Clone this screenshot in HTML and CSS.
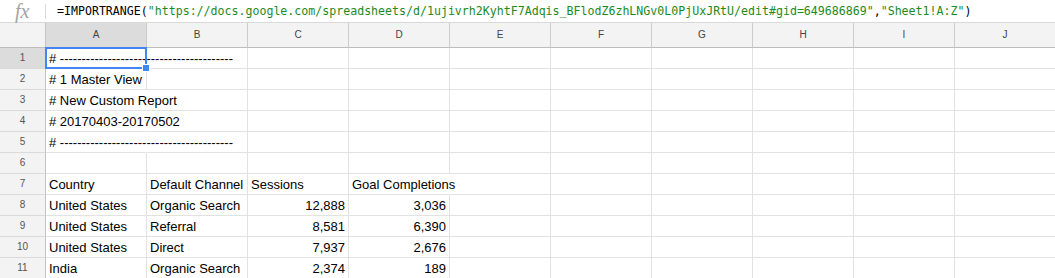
FILE: index.html
```html
<!DOCTYPE html>
<html lang="en">
<head>
    <meta charset="UTF-8">
    <title>Sheet1 - Google Sheets</title>
    <link rel="stylesheet" href="styles.css">
</head>
<body>
    <div class="formula-bar">
        <span class="fx">fx</span>
        <span class="fx-sep"></span>
        <div class="formula">=IMPORTRANGE(<span class="str">"https://docs.google.com/spreadsheets/d/1ujivrh2KyhtF7Adqis_BFlodZ6zhLNGv0L0PjUxJRtU/edit#gid=649686869"</span>,<span class="str">"Sheet1!A:Z"</span>)</div>
    </div>

    <div class="sheet">
        <!-- column headers -->
        <div class="corner"></div>
        <div class="col-head active">A</div>
        <div class="col-head">B</div>
        <div class="col-head">C</div>
        <div class="col-head">D</div>
        <div class="col-head">E</div>
        <div class="col-head">F</div>
        <div class="col-head">G</div>
        <div class="col-head">H</div>
        <div class="col-head">I</div>
        <div class="col-head">J</div>

        <!-- row 1 -->
        <div class="row-head active">1</div>
        <div class="cell spill selected">
            # ----------------------------------------
            <div class="cursor"><span class="handle"></span></div>
        </div>
        <div class="cell"></div><div class="cell"></div><div class="cell"></div><div class="cell"></div>
        <div class="cell"></div><div class="cell"></div><div class="cell"></div><div class="cell"></div><div class="cell"></div>

        <!-- row 2 -->
        <div class="row-head">2</div>
        <div class="cell"># 1 Master View</div>
        <div class="cell"></div><div class="cell"></div><div class="cell"></div><div class="cell"></div>
        <div class="cell"></div><div class="cell"></div><div class="cell"></div><div class="cell"></div><div class="cell"></div>

        <!-- row 3 -->
        <div class="row-head">3</div>
        <div class="cell spill"># New Custom Report</div>
        <div class="cell"></div><div class="cell"></div><div class="cell"></div><div class="cell"></div>
        <div class="cell"></div><div class="cell"></div><div class="cell"></div><div class="cell"></div><div class="cell"></div>

        <!-- row 4 -->
        <div class="row-head">4</div>
        <div class="cell spill"># 20170403-20170502</div>
        <div class="cell"></div><div class="cell"></div><div class="cell"></div><div class="cell"></div>
        <div class="cell"></div><div class="cell"></div><div class="cell"></div><div class="cell"></div><div class="cell"></div>

        <!-- row 5 -->
        <div class="row-head">5</div>
        <div class="cell spill"># ----------------------------------------</div>
        <div class="cell"></div><div class="cell"></div><div class="cell"></div><div class="cell"></div>
        <div class="cell"></div><div class="cell"></div><div class="cell"></div><div class="cell"></div><div class="cell"></div>

        <!-- row 6 -->
        <div class="row-head">6</div>
        <div class="cell"></div><div class="cell"></div><div class="cell"></div><div class="cell"></div><div class="cell"></div>
        <div class="cell"></div><div class="cell"></div><div class="cell"></div><div class="cell"></div><div class="cell"></div>

        <!-- row 7 -->
        <div class="row-head">7</div>
        <div class="cell">Country</div>
        <div class="cell">Default Channel</div>
        <div class="cell">Sessions</div>
        <div class="cell spill">Goal Completions</div>
        <div class="cell"></div><div class="cell"></div><div class="cell"></div><div class="cell"></div><div class="cell"></div><div class="cell"></div>

        <!-- row 8 -->
        <div class="row-head">8</div>
        <div class="cell">United States</div>
        <div class="cell">Organic Search</div>
        <div class="cell num">12,888</div>
        <div class="cell num">3,036</div>
        <div class="cell"></div><div class="cell"></div><div class="cell"></div><div class="cell"></div><div class="cell"></div><div class="cell"></div>

        <!-- row 9 -->
        <div class="row-head">9</div>
        <div class="cell">United States</div>
        <div class="cell">Referral</div>
        <div class="cell num">8,581</div>
        <div class="cell num">6,390</div>
        <div class="cell"></div><div class="cell"></div><div class="cell"></div><div class="cell"></div><div class="cell"></div><div class="cell"></div>

        <!-- row 10 -->
        <div class="row-head">10</div>
        <div class="cell">United States</div>
        <div class="cell">Direct</div>
        <div class="cell num">7,937</div>
        <div class="cell num">2,676</div>
        <div class="cell"></div><div class="cell"></div><div class="cell"></div><div class="cell"></div><div class="cell"></div><div class="cell"></div>

        <!-- row 11 -->
        <div class="row-head">11</div>
        <div class="cell">India</div>
        <div class="cell">Organic Search</div>
        <div class="cell num">2,374</div>
        <div class="cell num">189</div>
        <div class="cell"></div><div class="cell"></div><div class="cell"></div><div class="cell"></div><div class="cell"></div><div class="cell"></div>
    </div>
</body>
</html>
```

FILE: styles.css
```css
:root {
    --grid: #e2e2e2;
    --head-bg: #f3f3f3;
    --head-active: #dcdcdc;
    --head-line: #cccccc;
    --blue: #4285f4;
    --string: #1d8a1d;
}

* {
    margin: 0;
    padding: 0;
    box-sizing: border-box;
}

body {
    background-color: #fff;
    color: #000;
    overflow: hidden;
    font-family: "Liberation Sans", Arial, sans-serif;
}

/* formula bar */
.formula-bar {
    display: flex;
    align-items: center;
    height: 23px;
    border-bottom: 1px solid #d9d9d9;
}

.fx {
    width: 45px;
    padding-left: 15px;
    font-family: "Liberation Serif", serif;
    font-style: italic;
    font-size: 20px;
    line-height: 22px;
    color: #a3a3a3;
}

.fx-sep {
    width: 1px;
    height: 15px;
    background-color: #dadada;
}

.formula {
    margin-left: 11px;
    font-family: "DejaVu Sans Mono", "Liberation Mono", monospace;
    font-size: 11.6px;
    white-space: nowrap;
    color: #000;
}

.formula .str {
    color: var(--string);
}

/* grid */
.sheet {
    display: grid;
    grid-template-columns: 46px repeat(10, 101px);
    grid-template-rows: 25px;
    grid-auto-rows: 21px;
    font-size: 13px;
}

.corner {
    background-color: var(--head-bg);
    border-right: 1px solid #c4c4c4;
    border-bottom: 1px solid #bdbdbd;
}

.col-head {
    background-color: var(--head-bg);
    border-right: 1px solid var(--head-line);
    border-bottom: 1px solid #bdbdbd;
    text-align: center;
    font-size: 10px;
    line-height: 24px;
    color: #444;
}

.row-head {
    background-color: var(--head-bg);
    border-right: 1px solid #c4c4c4;
    border-bottom: 1px solid #dadada;
    text-align: center;
    font-size: 10px;
    line-height: 20px;
    color: #555;
}

.col-head.active,
.row-head.active {
    background-color: var(--head-active);
}

.cell {
    border-right: 1px solid var(--grid);
    border-bottom: 1px solid var(--grid);
    padding: 0 3px;
    line-height: 21px;
    white-space: nowrap;
}

/* text running over into the next empty cell hides the line between */
.cell.spill {
    border-right-color: transparent;
}

.cell.num {
    text-align: right;
}

.cell.selected {
    position: relative;
}

.cursor {
    position: absolute;
    top: -1px;
    left: -1px;
    right: -1px;
    bottom: -1px;
    border: 2px solid var(--blue);
    z-index: 2;
}

.handle {
    position: absolute;
    right: -5px;
    bottom: -5px;
    width: 8px;
    height: 8px;
    background-color: var(--blue);
    border: 1px solid #fff;
}
```
